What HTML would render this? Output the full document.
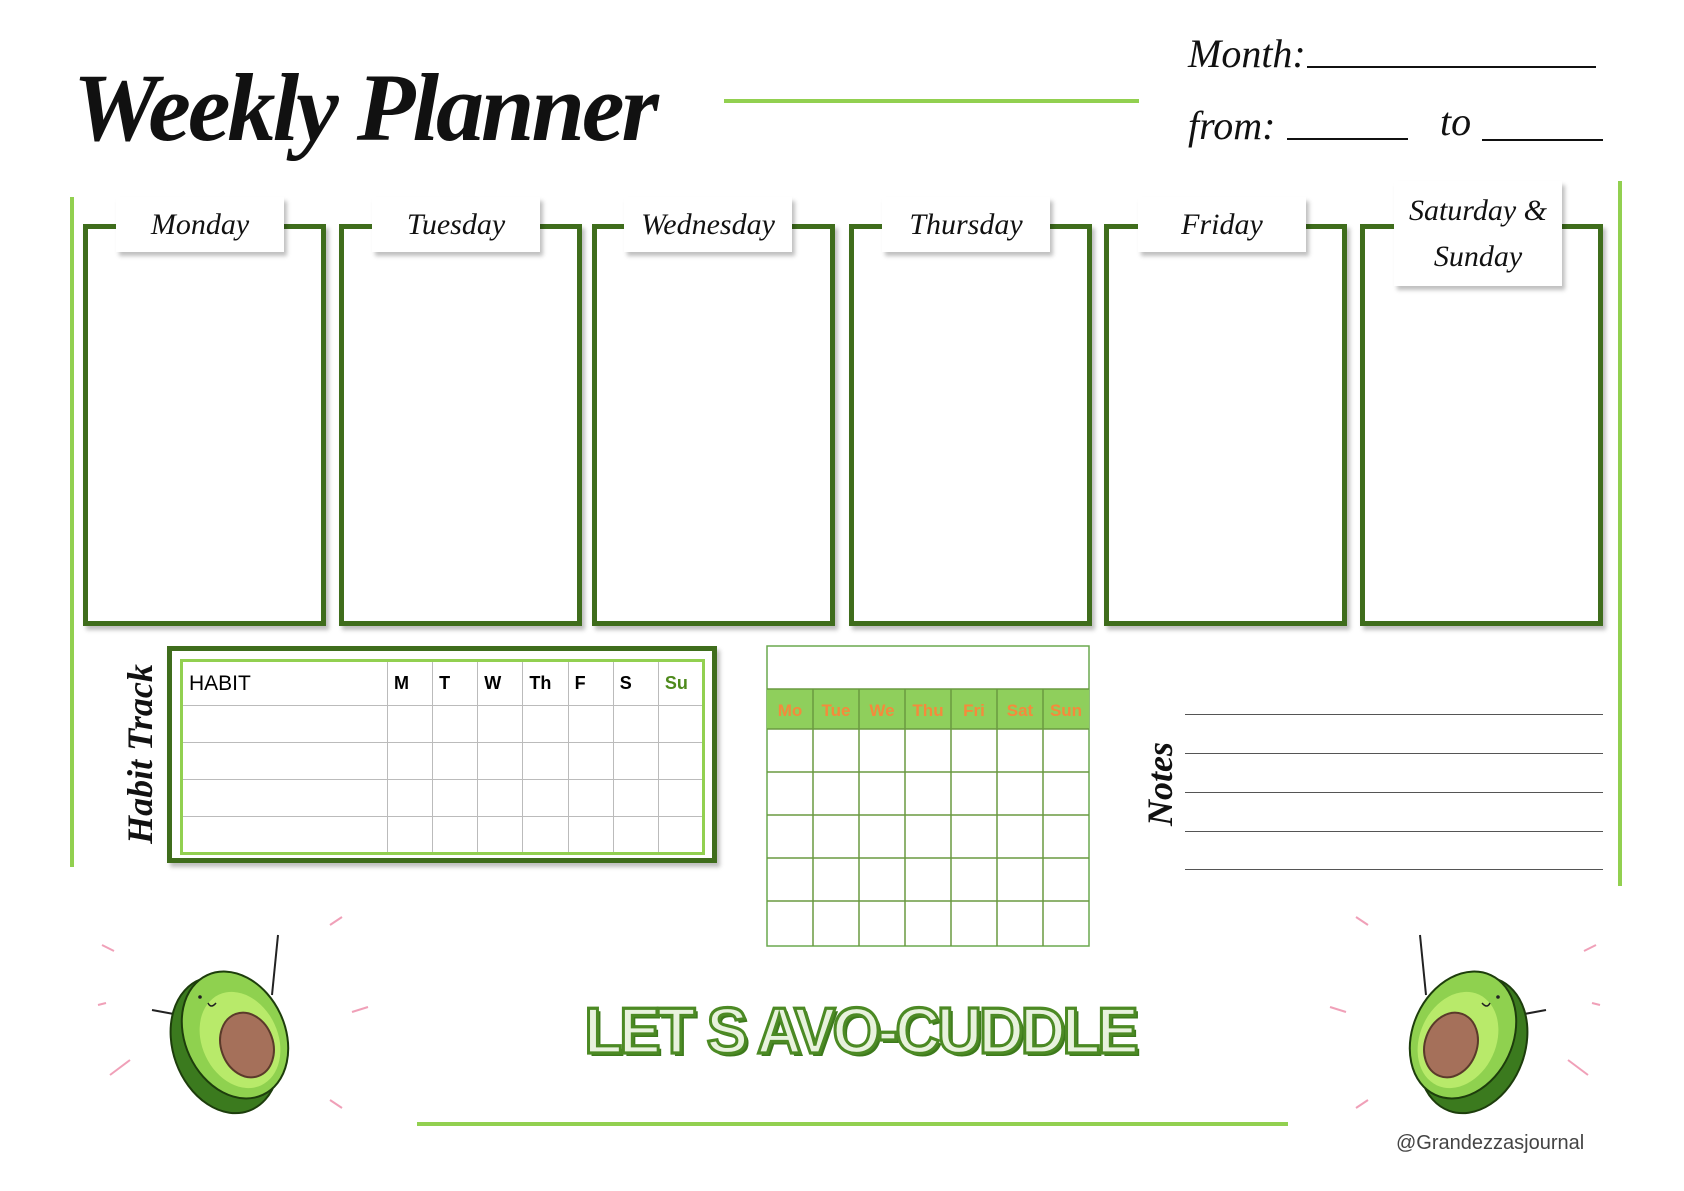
<!DOCTYPE html>
<html><head><meta charset="utf-8"><style>
*{margin:0;padding:0;box-sizing:border-box}
body{width:1684px;height:1191px;background:#fff;position:relative;overflow:hidden;font-family:"Liberation Serif",serif}
.a{position:absolute}
.scr{font-family:"Liberation Serif",serif;font-style:italic;color:#111;white-space:nowrap}
.box{position:absolute;top:224px;width:243px;height:402px;border:5px solid #3f6d1c;box-shadow:3px 4px 4px rgba(0,0,0,.25)}
.tab{position:absolute;background:#fff;box-shadow:3px 4px 4px rgba(0,0,0,.25);display:flex;align-items:center;justify-content:center;font-size:30px;font-style:italic;color:#111}
.ln{position:absolute;background:#111;height:2px}
table{border-collapse:collapse;table-layout:fixed}
td{border:1px solid #bbb}
</style></head><body>
<div class="a scr" style="left:73px;top:52px;font-size:96px;font-weight:bold;letter-spacing:-3px">Weekly Planner</div>
<div class="a" style="left:724px;top:99px;width:415px;height:4px;background:#92d050"></div>
<div class="a scr" style="left:1188px;top:30px;font-size:40px">Month:</div>
<div class="ln" style="left:1307px;top:66px;width:289px"></div>
<div class="a scr" style="left:1188px;top:102px;font-size:40px">from:</div>
<div class="ln" style="left:1287px;top:138px;width:121px"></div>
<div class="a scr" style="left:1440px;top:98px;font-size:40px">to</div>
<div class="ln" style="left:1482px;top:139px;width:121px"></div>
<div class="a" style="left:70px;top:197px;width:4px;height:670px;background:#92d050"></div>
<div class="a" style="left:1618px;top:181px;width:4px;height:705px;background:#92d050"></div>

<div class="box" style="left:83px"></div>
<div class="box" style="left:339px"></div>
<div class="box" style="left:592px"></div>
<div class="box" style="left:849px"></div>
<div class="box" style="left:1104px"></div>
<div class="box" style="left:1360px"></div>
<div class="tab" style="left:116px;top:197px;width:168px;height:55px">Monday</div>
<div class="tab" style="left:372px;top:197px;width:168px;height:55px">Tuesday</div>
<div class="tab" style="left:624px;top:197px;width:168px;height:55px">Wednesday</div>
<div class="tab" style="left:882px;top:197px;width:168px;height:55px">Thursday</div>
<div class="tab" style="left:1138px;top:197px;width:168px;height:55px">Friday</div>
<div class="tab" style="left:1394px;top:181px;width:168px;height:105px;line-height:46px;text-align:center">Saturday &amp;<br>Sunday</div>

<div class="a scr" style="left:45px;top:733px;width:190px;text-align:center;transform:rotate(-90deg);font-size:36px;font-weight:bold">Habit Track</div>
<div class="a" style="left:167px;top:646px;width:550px;height:217px;border:5px solid #3f6d1c;box-shadow:3px 4px 4px rgba(0,0,0,.25)"></div>
<table class="a" style="left:180px;top:659px;width:525px;height:193px;border:3px solid #92d050;font-family:'Liberation Sans',sans-serif;font-size:18px">
<colgroup><col style="width:206px"><col><col><col><col><col><col><col></colgroup>
<tr style="height:45px"><td style="padding-left:6px;font-size:21px">HABIT</td><td style="padding-left:6px;font-weight:bold">M</td><td style="padding-left:6px;font-weight:bold">T</td><td style="padding-left:6px;font-weight:bold">W</td><td style="padding-left:6px;font-weight:bold">Th</td><td style="padding-left:6px;font-weight:bold">F</td><td style="padding-left:6px;font-weight:bold">S</td><td style="padding-left:6px;font-weight:bold;color:#4e8a1c">Su</td></tr>
<tr style="height:37px"><td></td><td></td><td></td><td></td><td></td><td></td><td></td><td></td></tr>
<tr style="height:37px"><td></td><td></td><td></td><td></td><td></td><td></td><td></td><td></td></tr>
<tr style="height:37px"><td></td><td></td><td></td><td></td><td></td><td></td><td></td><td></td></tr>
<tr style="height:37px"><td></td><td></td><td></td><td></td><td></td><td></td><td></td><td></td></tr>
</table>

<svg class="a" style="left:764px;top:645px" width="328" height="304">
<rect x="3" y="1" width="322" height="300" fill="#fff" stroke="#6aa84f" stroke-width="1.5"/>
<rect x="3" y="44" width="322" height="40" fill="#8fcf5c"/>
<g stroke="#6a9a40" stroke-width="1.5">
<line x1="3" y1="44" x2="325" y2="44"/><line x1="3" y1="84" x2="325" y2="84"/>
<line x1="3" y1="127" x2="325" y2="127"/><line x1="3" y1="170" x2="325" y2="170"/>
<line x1="3" y1="213" x2="325" y2="213"/><line x1="3" y1="256" x2="325" y2="256"/>
<line x1="49" y1="44" x2="49" y2="301"/><line x1="95" y1="44" x2="95" y2="301"/><line x1="141" y1="44" x2="141" y2="301"/><line x1="187" y1="44" x2="187" y2="301"/><line x1="233" y1="44" x2="233" y2="301"/><line x1="279" y1="44" x2="279" y2="301"/>
</g>
<g font-family="Liberation Sans,sans-serif" font-size="17" font-weight="bold" fill="#f58a3c" text-anchor="middle">
<text x="26" y="71">Mo</text><text x="72" y="71">Tue</text><text x="118" y="71">We</text><text x="164" y="71">Thu</text><text x="210" y="71">Fri</text><text x="256" y="71">Sat</text><text x="302" y="71">Sun</text></g>
</svg>

<div class="a scr" style="left:1110px;top:755px;width:100px;transform:rotate(-90deg);font-size:36px;font-weight:bold">Notes</div>
<div class="a" style="left:1185px;top:714px;width:418px;height:1px;background:#555"></div>
<div class="a" style="left:1185px;top:753px;width:418px;height:1px;background:#555"></div>
<div class="a" style="left:1185px;top:792px;width:418px;height:1px;background:#555"></div>
<div class="a" style="left:1185px;top:831px;width:418px;height:1px;background:#555"></div>
<div class="a" style="left:1185px;top:869px;width:418px;height:1px;background:#555"></div>

<svg class="a" style="left:90px;top:905px" width="290" height="220">
<g stroke="#f0a0b8" stroke-width="2"><line x1="12" y1="40" x2="24" y2="46"/><line x1="8" y1="100" x2="16" y2="98"/><line x1="20" y1="170" x2="40" y2="155"/><line x1="240" y1="20" x2="252" y2="12"/><line x1="262" y1="107" x2="278" y2="102"/><line x1="240" y1="195" x2="252" y2="203"/></g>
<line x1="188" y1="30" x2="182" y2="90" stroke="#222" stroke-width="2"/>
<line x1="62" y1="105" x2="100" y2="112" stroke="#222" stroke-width="2"/>
<ellipse cx="135" cy="140" rx="52" ry="70" fill="#3b7a1e" stroke="#1d3d0c" stroke-width="2" transform="rotate(-20 135 140)"/>
<ellipse cx="145" cy="130" rx="50" ry="66" fill="#8fd14f" stroke="#1d3d0c" stroke-width="2" transform="rotate(-25 145 130)"/>
<ellipse cx="150" cy="135" rx="38" ry="50" fill="#b8ea6a" transform="rotate(-25 150 135)"/>
<ellipse cx="157" cy="140" rx="26" ry="33" fill="#a5705a" stroke="#5a3a2a" stroke-width="2" transform="rotate(-20 157 140)"/>
<circle cx="110" cy="92" r="1.8" fill="#222"/><path d="M118 98 q3 6 8 0" stroke="#222" fill="none" stroke-width="1.5"/>
</svg>
<svg class="a" style="left:1318px;top:905px;transform:scaleX(-1)" width="290" height="220">
<g stroke="#f0a0b8" stroke-width="2"><line x1="12" y1="40" x2="24" y2="46"/><line x1="8" y1="100" x2="16" y2="98"/><line x1="20" y1="170" x2="40" y2="155"/><line x1="240" y1="20" x2="252" y2="12"/><line x1="262" y1="107" x2="278" y2="102"/><line x1="240" y1="195" x2="252" y2="203"/></g>
<line x1="188" y1="30" x2="182" y2="90" stroke="#222" stroke-width="2"/>
<line x1="62" y1="105" x2="100" y2="112" stroke="#222" stroke-width="2"/>
<ellipse cx="135" cy="140" rx="52" ry="70" fill="#3b7a1e" stroke="#1d3d0c" stroke-width="2" transform="rotate(-20 135 140)"/>
<ellipse cx="145" cy="130" rx="50" ry="66" fill="#8fd14f" stroke="#1d3d0c" stroke-width="2" transform="rotate(-25 145 130)"/>
<ellipse cx="150" cy="135" rx="38" ry="50" fill="#b8ea6a" transform="rotate(-25 150 135)"/>
<ellipse cx="157" cy="140" rx="26" ry="33" fill="#a5705a" stroke="#5a3a2a" stroke-width="2" transform="rotate(-20 157 140)"/>
<circle cx="110" cy="92" r="1.8" fill="#222"/><path d="M118 98 q3 6 8 0" stroke="#222" fill="none" stroke-width="1.5"/>
</svg>

<div class="a" style="left:565px;top:996px;width:590px;text-align:center;font-family:'Liberation Sans',sans-serif;font-weight:bold;font-size:62px;letter-spacing:-3px;color:#e8f2dd;-webkit-text-stroke:3px #4c8a24;text-shadow:3px 3px 0 #3d7a1c;transform:scaleY(1.05)">LET S AVO-CUDDLE</div>
<div class="a" style="left:417px;top:1122px;width:871px;height:4px;background:#92d050"></div>
<div class="a" style="left:1396px;top:1132px;font-family:'Liberation Sans',sans-serif;font-size:20px;color:#444">@Grandezzasjournal</div>
</body></html>
